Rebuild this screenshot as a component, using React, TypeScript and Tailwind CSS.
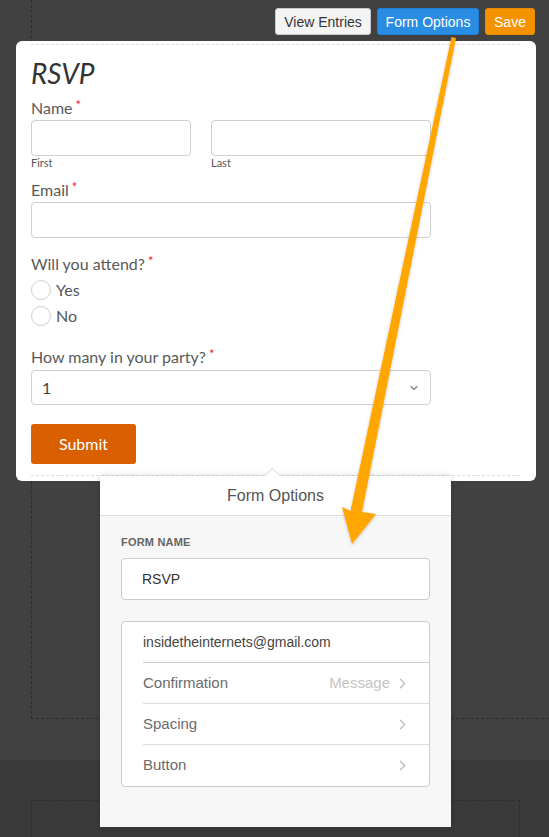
import { ChevronDown, ChevronRight } from "lucide-react";

const lato = { fontFamily: "Lato, 'Open Sans', sans-serif" };
const helv = { fontFamily: "'Liberation Sans', Arial, sans-serif" };

function Req() {
  return <span className="ml-[3px] align-top text-[13px] leading-[14px] text-[#e8262a]">*</span>;
}

function Radio({ label }: { label: string }) {
  return (
    <div className="flex h-[26px] items-center gap-[5px]">
      <span className="h-5 w-5 rounded-full border border-[#cfcfcf] bg-white" />
      <span className="text-base text-[#555]">{label}</span>
    </div>
  );
}

function OptionRow({ label, value, last }: { label: string; value?: string; last?: boolean }) {
  return (
    <div className="pl-[21px]">
      <div
        className={`flex h-[41px] items-center justify-between pr-[18px] ${
          last ? "" : "border-b border-[#dcdcdc]"
        }`}
      >
        <span className="text-[15px] text-[#6b6b6b]">{label}</span>
        <span className="flex items-center gap-[4px]">
          {value && <span className="text-[15px] text-[#c4c4c4]">{value}</span>}
          <ChevronRight size={17} strokeWidth={2} className="text-[#bdbdbd]" />
        </span>
      </div>
    </div>
  );
}

export default function App() {
  return (
    <div className="relative h-[837px] w-[549px] overflow-hidden bg-[#414141]">
      <div className="h-[760px]">
        <div className="ml-[31px] h-[719px] border-b border-l border-dashed border-[#2e2e2e]">
          {/* toolbar */}
          <div className="flex justify-end gap-[6px] pr-[14px] pt-2 text-sm" style={helv}>
            <button className="h-[27px] w-[96px] rounded-[3px] border border-[#c9c9c9] bg-[#f4f4f4] text-[#333]">
              View Entries
            </button>
            <button className="h-[27px] w-[102px] rounded-[3px] border border-[#1f7fd6] bg-[#2a8de4] text-white">
              Form Options
            </button>
            <button className="h-[27px] w-[50px] rounded-[3px] border border-[#ea8a00] bg-[#f59200] text-white">
              Save
            </button>
          </div>

          {/* form card */}
          <div className="-ml-[16px] mt-[6px] h-[440px] w-[520px] rounded-md bg-white pt-[3px]" style={lato}>
            <div className="ml-[15px] h-[432px] w-[489px] border-b border-t border-dashed border-[#dddddd]">
              <h1 className="pt-[11px] text-[28px] italic leading-[34px] text-[#333]">RSVP</h1>

              <div className="mt-[8px] text-base leading-5 text-[#5a5a5a]">
                Name<Req />
              </div>
              <div className="mt-[2px] flex gap-[20px]">
                <div className="w-[160px]">
                  <div className="h-9 rounded border border-[#cfcfcf]" />
                  <div className="text-[11px] leading-[14px] text-[#555]">First</div>
                </div>
                <div className="w-[220px]">
                  <div className="h-9 rounded border border-[#cfcfcf]" />
                  <div className="text-[11px] leading-[14px] text-[#555]">Last</div>
                </div>
              </div>

              <div className="mt-[10px] text-base leading-5 text-[#5a5a5a]">
                Email<Req />
              </div>
              <div className="mt-[2px] h-9 w-[400px] rounded border border-[#cfcfcf]" />

              <div className="mt-4 text-base leading-5 text-[#5a5a5a]">
                Will you attend?<Req />
              </div>
              <div className="mt-[3px]">
                <Radio label="Yes" />
                <Radio label="No" />
              </div>

              <div className="mt-[18px] text-base leading-5 text-[#5a5a5a]">
                How many in your party?<Req />
              </div>
              <div className="mt-[3px] flex h-[35px] w-[400px] items-center justify-between rounded border border-[#cfcfcf] pl-[10px] pr-[10px] text-base text-[#444]">
                <span>1</span>
                <ChevronDown size={12} strokeWidth={2.5} className="text-[#888]" />
              </div>

              <button className="mt-[19px] h-10 w-[105px] rounded-[3px] bg-[#d95f00] text-base text-white">
                Submit
              </button>
            </div>
          </div>

          {/* form options popover */}
          <div
            className="relative z-10 -mt-[5px] ml-[68px] h-[351px] w-[351px] bg-[#f7f7f7] shadow-[0_0_6px_rgba(0,0,0,0.18)]"
            style={helv}
          >
            <span className="absolute -top-[6px] left-[167px] h-[11px] w-[11px] rotate-45 border-l border-t border-[#e2e2e2] bg-white" />
            <div className="relative flex h-10 items-center justify-center border-b border-[#dedede] bg-white text-base text-[#555]">
              Form Options
            </div>
            <div className="px-[21px] pt-[19px]">
              <div className="text-[11px] font-bold leading-[14px] tracking-[0.2px] text-[#666]">FORM NAME</div>
              <div className="mt-[9px] flex h-[42px] items-center rounded-sm border border-[#cccccc] bg-white pl-[20px] text-sm text-[#333]">
                RSVP
              </div>
              <div className="mt-[21px] rounded-sm border border-[#cccccc] bg-white">
                <div className="pl-[21px]">
                  <div className="flex h-[41px] items-center border-b border-[#cfcfcf] text-sm text-[#444]">
                    insidetheinternets@gmail.com
                  </div>
                </div>
                <OptionRow label="Confirmation" value="Message" />
                <OptionRow label="Spacing" />
                <OptionRow label="Button" last />
              </div>
            </div>
          </div>
        </div>
      </div>

      <div className="h-[77px] bg-[#3a3a3a] pt-[40px]">
        <div className="ml-[31px] h-full w-[489px] border-l border-r border-t border-dashed border-[#2e2e2e]" />
      </div>

      {/* annotation arrow */}
      <svg className="pointer-events-none absolute left-0 top-0 z-20" width="549" height="837">
        <defs>
          <filter id="sh" x="-20%" y="-20%" width="140%" height="140%">
            <feDropShadow dx="0" dy="1" stdDeviation="1.5" floodColor="#000" floodOpacity="0.25" />
          </filter>
        </defs>
        <polygon
          points="451.5,37 456,38 362,512 376,514 352,544 342,507 350.5,511"
          fill="#ffa600"
          filter="url(#sh)"
        />
      </svg>
    </div>
  );
}
